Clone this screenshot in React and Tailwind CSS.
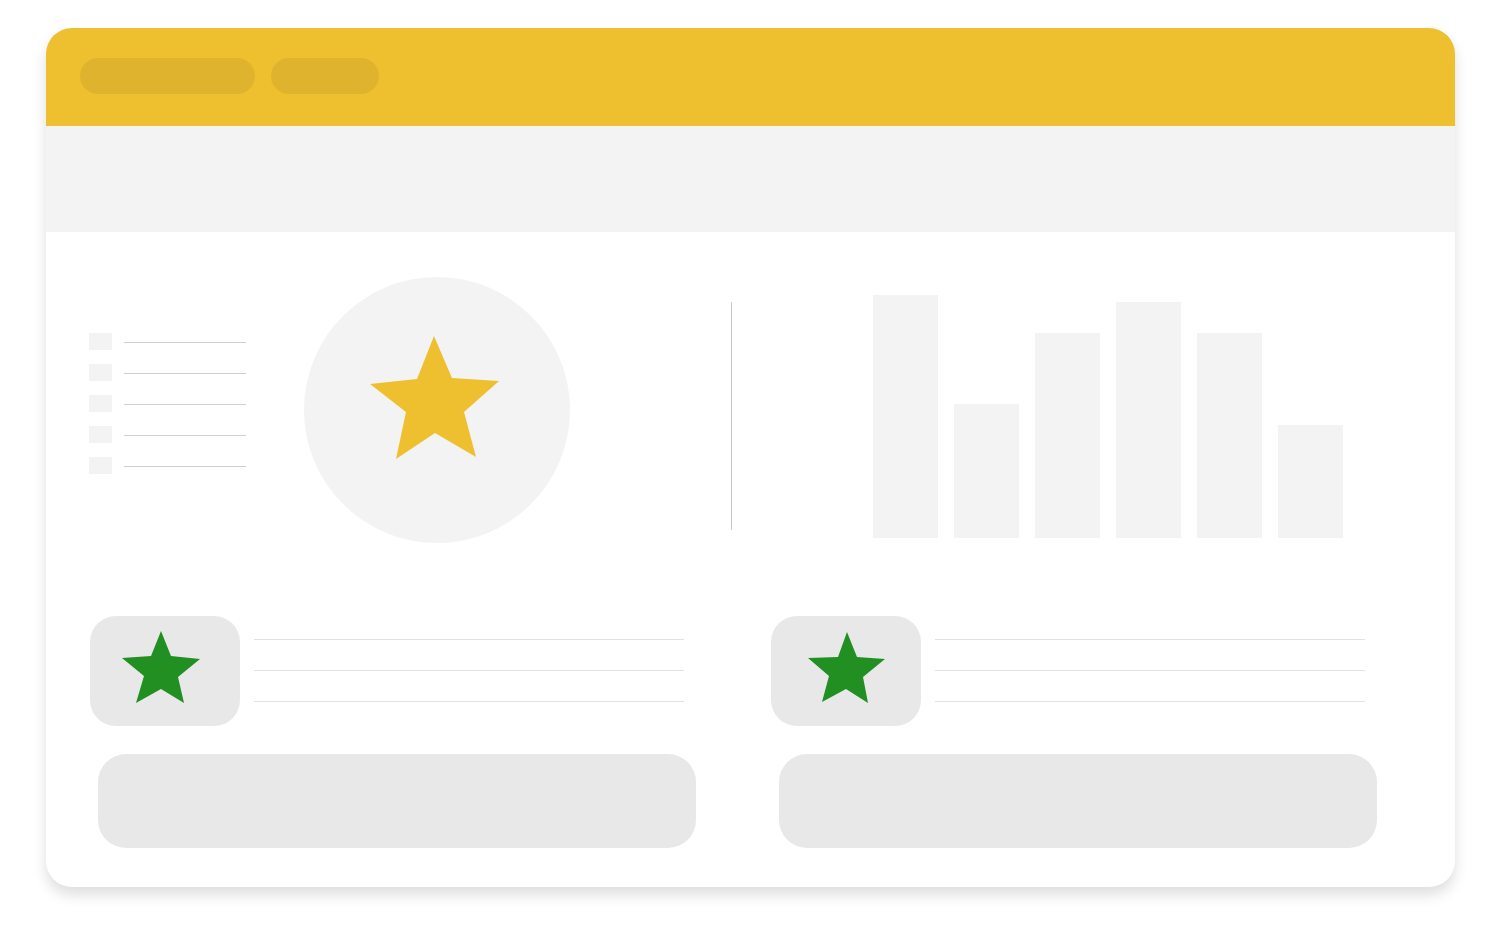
import React from 'react';

const bars = [243, 134, 205, 236, 205, 113];
const leftStar = '71,15 61,40 32,42 54,60 46,87 71,73 94,87 88,61 110,43 81,40';
const rightStar = '76,16 67,41 37,42 58,60 51,86 75,73 97,87 92,61 114,43 86,41';

const ListRow = () => (
  <div className="flex items-start h-[31px]">
    <div className="w-[23px] h-[17px] bg-[#f3f3f3]" />
    <div className="ml-[12px] mt-[9px] w-[122px] h-px bg-[#d0d0d0]" />
  </div>
);

const InfoBlock = ({ star }) => (
  <div className="w-[610px] flex flex-col">
    <div className="flex items-start">
      <div className="w-[150px] h-[110px] rounded-[26px] bg-[#e8e8e8] shrink-0">
        <svg width="150" height="110" viewBox="0 0 150 110">
          <polygon points={star} fill="#218f21" />
        </svg>
      </div>
      <div className="ml-[14px] mt-[23px] flex flex-col gap-[30px] w-[430px]">
        <div className="h-px bg-[#e2e2e2]" />
        <div className="h-px bg-[#e2e2e2]" />
        <div className="h-px bg-[#e2e2e2]" />
      </div>
    </div>
    <div className="ml-[8px] mt-[28px] w-[598px] h-[94px] rounded-[28px] bg-[#e8e8e8]" />
  </div>
);

export default function App() {
  return (
    <div className="w-[1500px] h-[946px] bg-white pt-[28px] pl-[46px]">
      <div className="w-[1409px] h-[859px] rounded-[26px] overflow-hidden bg-white shadow-[0_8px_14px_rgba(0,0,0,0.13)] flex flex-col">
        <div className="h-[98px] bg-[#eec02f] flex gap-[16px] pl-[34px] pt-[30px]">
          <div className="w-[175px] h-[36px] rounded-full bg-[#dfb32d]" />
          <div className="w-[108px] h-[36px] rounded-full bg-[#dfb32d]" />
        </div>
        <div className="h-[106px] bg-[#f3f3f3]" />

        <div className="flex items-start pt-[45px] pl-[43px]">
          <div className="mt-[56px] flex flex-col w-[157px]">
            <ListRow />
            <ListRow />
            <ListRow />
            <ListRow />
            <ListRow />
          </div>
          <div className="ml-[58px] w-[266px] h-[266px] rounded-full bg-[#f3f3f3] shrink-0">
            <svg width="266" height="266" viewBox="0 0 266 266">
              <polygon
                points="130,59 113,102 66,107 102,135 92,182 131,156 172,180 160,135 195,104 148,101"
                fill="#eec02f"
              />
            </svg>
          </div>
          <div className="ml-[161px] mt-[25px] w-px h-[228px] bg-[#c8c8c8]" />
          <div className="ml-[141px] mt-[18px] h-[243px] flex items-end gap-[16px]">
            {bars.map((h, i) => (
              <div key={i} className="w-[65px] bg-[#f3f3f3]" style={{ height: h }} />
            ))}
          </div>
        </div>

        <div className="flex pl-[44px] mt-[73px] gap-[71px]">
          <InfoBlock star={leftStar} />
          <InfoBlock star={rightStar} />
        </div>
      </div>
    </div>
  );
}
